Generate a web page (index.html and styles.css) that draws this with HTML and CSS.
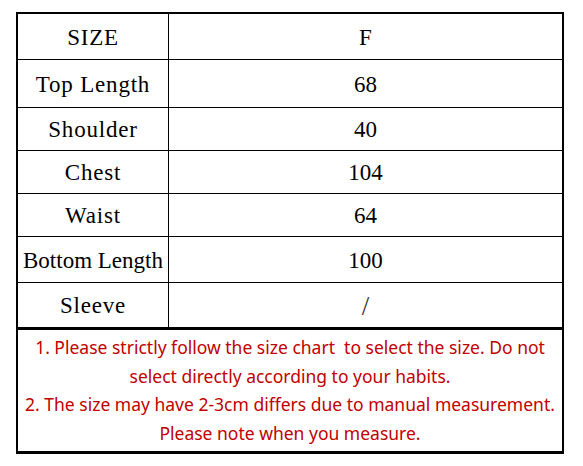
FILE: index.html
```html
<!DOCTYPE html>
<html>
<head>
<meta charset="utf-8">
<link rel="stylesheet" href="styles.css">
</head>
<body>
<table class="chart">
  <tr class="r-head"><td class="label">SIZE</td><td class="val">F</td></tr>
  <tr class="r1"><td class="label">Top Length</td><td class="val">68</td></tr>
  <tr class="r2"><td class="label">Shoulder</td><td class="val">40</td></tr>
  <tr class="r3"><td class="label">Chest</td><td class="val">104</td></tr>
  <tr class="r3"><td class="label">Waist</td><td class="val">64</td></tr>
  <tr class="r4"><td class="label tight">Bottom Length</td><td class="val">100</td></tr>
  <tr class="r5"><td class="label">Sleeve</td><td class="val slash">/</td></tr>
  <tr class="notes-row"><td class="notes" colspan="2">
    <p>1. Please strictly follow the size chart&nbsp; to select the size. Do not</p>
    <p>select directly according to your habits.</p>
    <p>2. The size may have 2-3cm differs due to manual measurement.</p>
    <p>Please note when you measure.</p>
  </td></tr>
</table>
</body>
</html>
```
FILE: styles.css
```css
html, body {
  margin: 0;
  padding: 0;
  background: #fff;
}
body {
  padding: 12px 0 0 16px;
}
.chart {
  border-collapse: collapse;
  width: 548px;
  table-layout: fixed;
  border: 2px solid #000;
}
.chart td {
  border: 1px solid #000;
  padding: 0;
  text-align: center;
  color: #000;
}
.label {
  width: 150px;
  font-family: "Liberation Serif", serif;
  font-size: 23px;
  letter-spacing: 0.8px;
}
.label.tight {
  letter-spacing: 0;
  white-space: nowrap;
}
.val {
  font-family: "Liberation Serif", serif;
  font-size: 23px;
}
.slash {
  font-family: "Liberation Serif", serif;
  font-size: 27px;
  color: #333 !important;
}
.r-head td { height: 43px; padding-top: 2px; }
.r1 td { height: 45px; padding-top: 2px; }
.r2 td { height: 40px; padding-top: 2px; }
.r3 td { height: 40px; padding-top: 2px; }
.r4 td { height: 43px; padding-top: 2px; }
.r5 td { height: 42px; padding-top: 2px; }
.notes-row td {
  border-top: 3px solid #000;
  border-bottom: 3px solid #000;
}
.notes {
  font-family: "Noto Sans", sans-serif;
  font-size: 17.5px;
  color: #c00000 !important;
  padding: 3px 0 3px !important;
}
.notes p {
  margin: 0;
  line-height: 28.7px;
  white-space: nowrap;
}
```
